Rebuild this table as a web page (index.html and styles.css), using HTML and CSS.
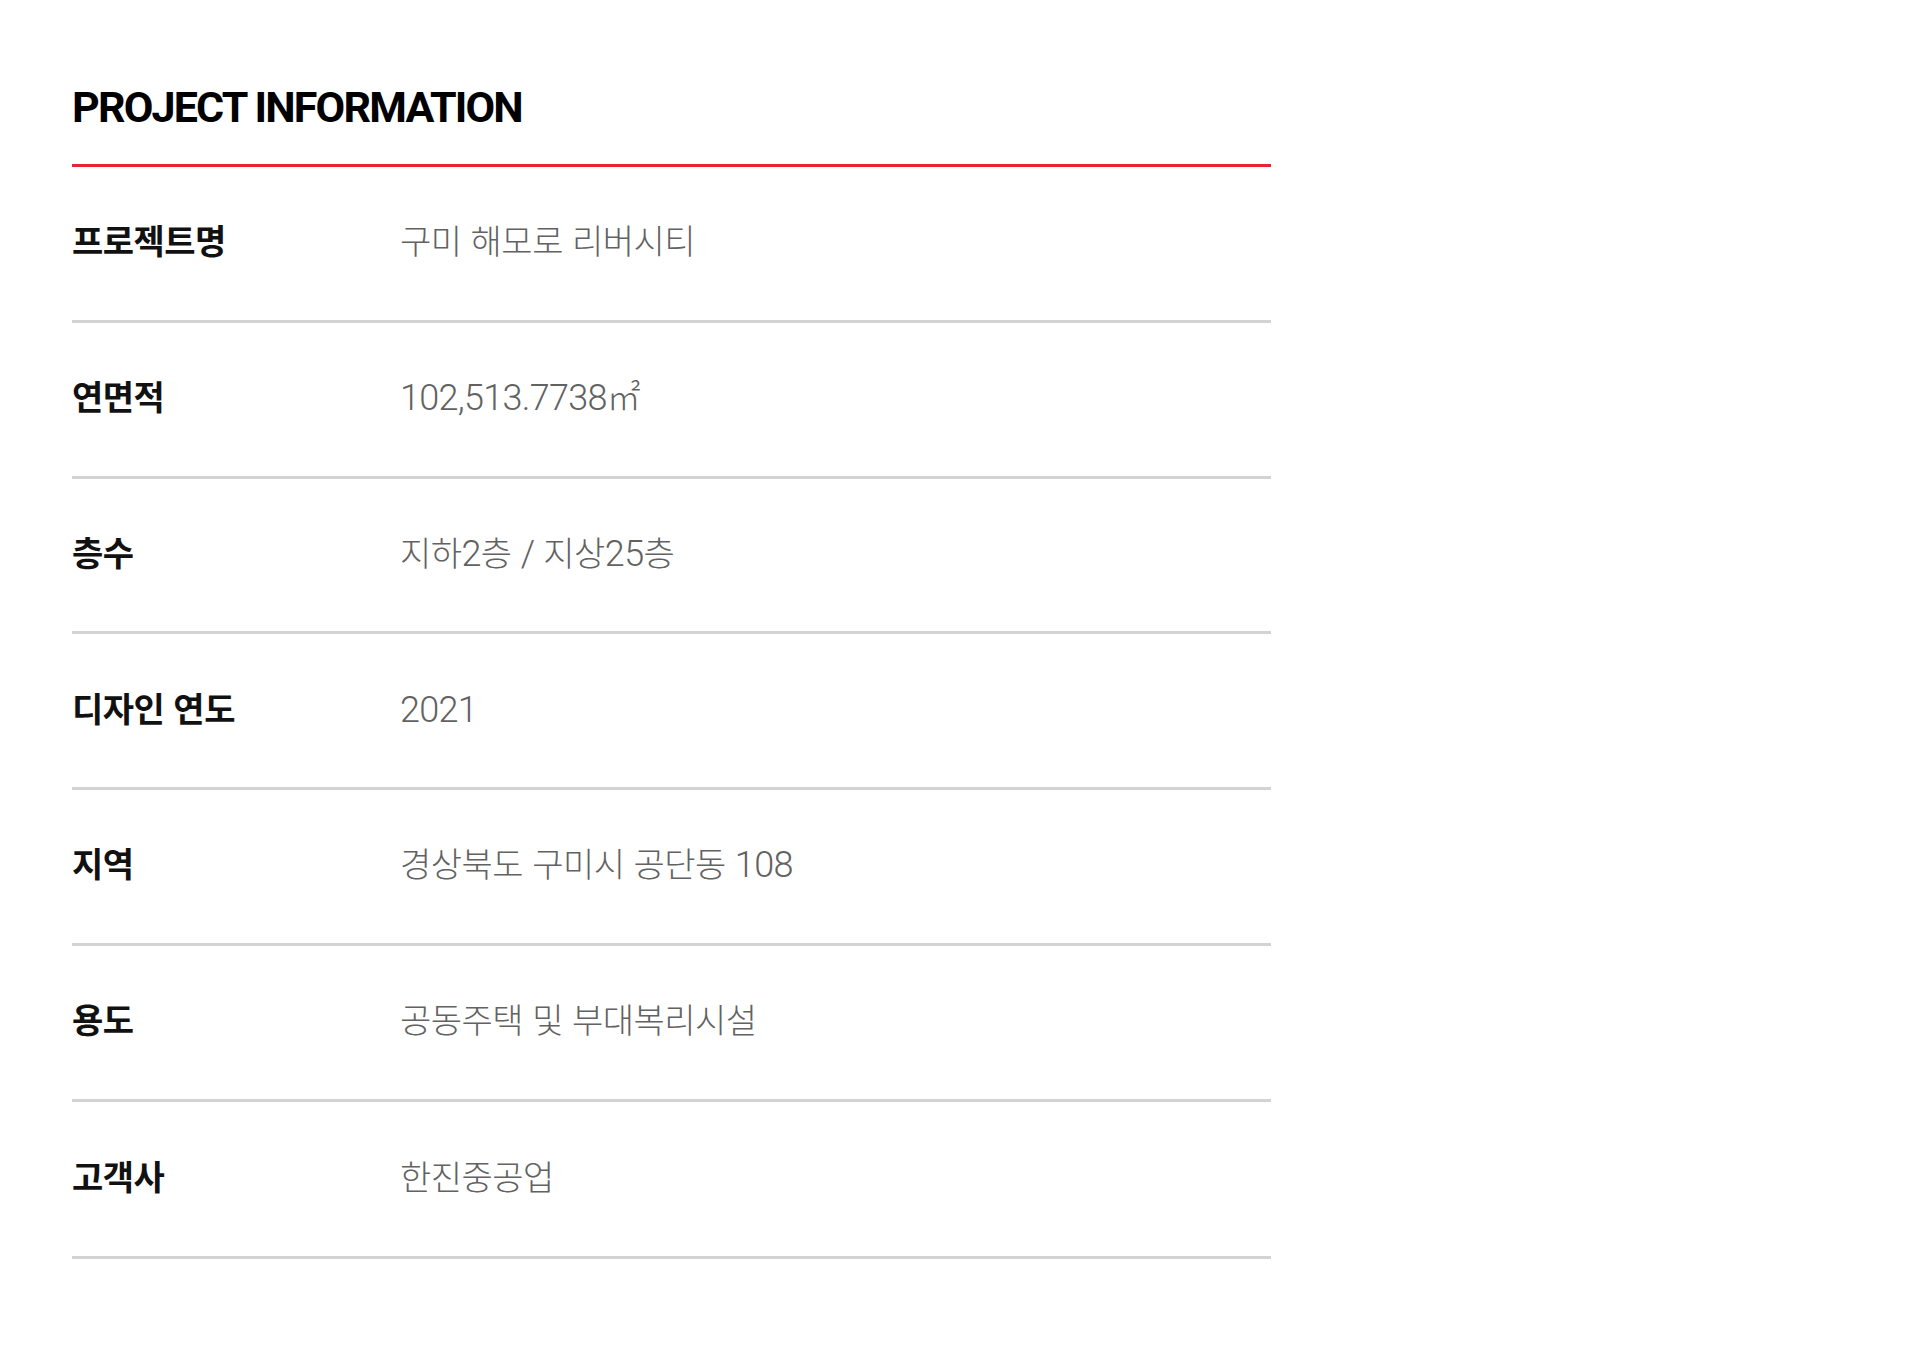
FILE: index.html
```html
<!DOCTYPE html>
<html lang="ko">
<head>
<meta charset="utf-8">
<title>Project Information</title>
<link rel="stylesheet" href="styles.css">
</head>
<body>
<section class="info">
  <h2 class="info-title">PROJECT INFORMATION</h2>
  <dl class="info-list">
    <div class="info-row"><dt class="info-label">프로젝트명</dt><dd class="info-value">구미 해모로 리버시티</dd></div>
    <div class="info-row"><dt class="info-label">연면적</dt><dd class="info-value"><span class="num">102,513.7738</span>㎡</dd></div>
    <div class="info-row"><dt class="info-label">층수</dt><dd class="info-value">지하<span class="num">2</span>층 <span class="num">/</span> 지상<span class="num">25</span>층</dd></div>
    <div class="info-row"><dt class="info-label">디자인 연도</dt><dd class="info-value"><span class="num">2021</span></dd></div>
    <div class="info-row"><dt class="info-label">지역</dt><dd class="info-value">경상북도 구미시 공단동 <span class="num">108</span></dd></div>
    <div class="info-row"><dt class="info-label">용도</dt><dd class="info-value">공동주택 및 부대복리시설</dd></div>
    <div class="info-row info-row-last"><dt class="info-label">고객사</dt><dd class="info-value">한진중공업</dd></div>
  </dl>
</section>
</body>
</html>
```
FILE: styles.css
```css
html, body {
  margin: 0;
  padding: 0;
  background: #ffffff;
}

.info {
  width: 1199px;
  padding: 85px 0 0 72px;
}

.info-title {
  margin: 0;
  padding-bottom: 35px;
  border-bottom: 3px solid #e8242c;
  font-family: Roboto, "Noto Sans CJK KR", sans-serif;
  font-weight: 700;
  font-size: 43px;
  line-height: 44px;
  color: #000000;
  letter-spacing: -1.8px;
}

.info-list {
  margin: 0;
  padding: 0;
}

.info-row {
  display: grid;
  grid-template-columns: 328px 1fr;
  align-items: center;
  box-sizing: border-box;
  height: 155.75px;
  padding-bottom: 7px;
  border-bottom: 3px solid #d3d3d3;
}

.info-row-last {
  height: 157.5px;
}

.info-label {
  margin: 0;
  font-family: "Noto Sans CJK KR", sans-serif;
  font-weight: 700;
  font-size: 34px;
  color: #111111;
  letter-spacing: -0.5px;
}

.info-value {
  margin: 0;
  font-family: "Noto Sans CJK KR", sans-serif;
  font-weight: 300;
  font-size: 34px;
  color: #626262;
  letter-spacing: -0.5px;
}

.num {
  font-family: Roboto, sans-serif;
  font-weight: 300;
  font-size: 36px;
  letter-spacing: -0.7px;
}
```
